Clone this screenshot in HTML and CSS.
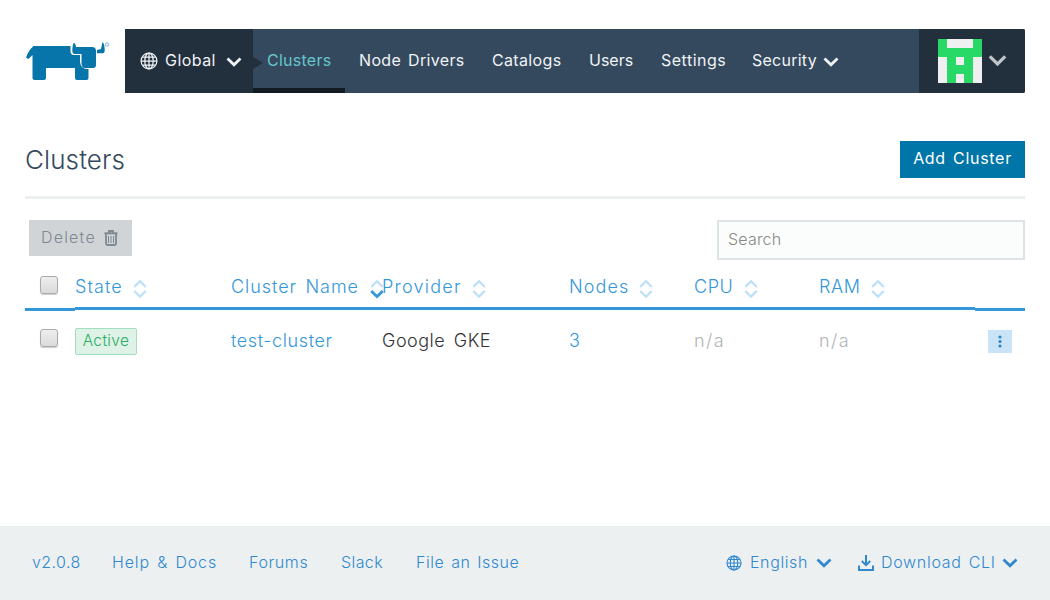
FILE: index.html
```html
<!DOCTYPE html>
<html lang="en">
<head>
<meta charset="utf-8">
<title>Clusters</title>
<link rel="stylesheet" href="styles.css">
</head>
<body>
<svg class="defs" width="0" height="0">
  <symbol id="chev" viewBox="0 0 16 10"><path d="M1.500 1.500l6.500 6.300L14.500 1.500" fill="none" stroke="currentColor" stroke-width="2.8"/></symbol>
  <symbol id="globe" viewBox="0 0 18 18"><g fill="none" stroke="currentColor" stroke-width="1.25"><circle cx="9" cy="9" r="7.9"/><ellipse cx="9" cy="9" rx="4.2" ry="7.9"/><path d="M9 1v16M1 9h16M2.500 5h13M2.500 13h13"/></g></symbol>
  <symbol id="sort" viewBox="0 0 14 20"><g fill="none" stroke="currentColor" stroke-width="2.4"><path d="M1.200 8L7 2.200 12.800 8"/><path d="M1.200 12L7 17.500 12.800 12"/></g></symbol>
</svg>
<header class="top">
  <svg class="logo" viewBox="0 0 100 64">
    <g fill="#0775aa">
      <path d="M8.500 17H45.500V23Q46 26 49 26H55V33Q56 40 62 40H63.500V49Q63.500 51 61.500 51H52Q50 51 50 49V39H21V49Q21 51 19 51H9.500Q7.500 51 7.500 49V26L3.500 30L1 28.500Q3 22 8.500 17Z"/>
      <path d="M49 13.500Q51 15 51 18H67Q71 18 71 22V36Q71 39 68 39H60Q56.500 39 56.500 34V25H50Q47.500 25 47.300 22Q47.300 16 49 13.500Z"/>
      <path d="M77.500 13Q79.800 15 79.700 22Q79.500 24.300 77.500 24.300H72V21L76 20Z"/>
    </g>
    <circle cx="82" cy="15.500" r="1.700" fill="none" stroke="#5ba3c7" stroke-width=".8"/>
  </svg>
  <nav class="bar">
    <a class="scope"><svg class="ico18"><use href="#globe"/></svg><span class="t-global">Global</span><svg class="chev"><use href="#chev"/></svg></a>
    <a class="item active">Clusters</a>
    <a class="item w-drivers">Node Drivers</a>
    <a class="item w-catalogs">Catalogs</a>
    <a class="item w-users">Users</a>
    <a class="item w-settings">Settings</a>
    <a class="item w-security"><span>Security</span><svg class="chev"><use href="#chev"/></svg></a>
    <a class="user">
      <svg class="avatar" viewBox="0 0 44 44" shape-rendering="crispEdges"><path fill="#f0f0f0" d="M0 0h44v44H0z"/><path fill="#28d968" d="M0 0h9v9h26V0h9v18h-9v26h-9v-9h-8v9H9V18H0zM18 18v8h8v-8z" fill-rule="evenodd"/></svg>
      <svg class="chev big"><use href="#chev"/></svg>
    </a>
  </nav>
</header>
<main>
  <section class="head"><h1>Clusters</h1><button class="add">Add Cluster</button></section>
  <section class="tools">
    <button class="delete"><span>Delete</span><svg viewBox="0 0 14 16"><path d="M.5 3.300h13" stroke="currentColor" stroke-width="2" fill="none"/><path d="M5 3V1h4v2M2 4v9.500q0 1.500 1.500 1.500h7q1.500 0 1.500-1.500V4" fill="none" stroke="currentColor" stroke-width="1.800"/><path d="M4.500 6v7M7 6v7M9.500 6v7" stroke="currentColor"/></svg></button>
    <input class="search" placeholder="Search">
  </section>
  <section class="table">
    <div class="row headrow">
      <div class="edge"><i class="check"></i></div>
      <div class="th t-state"><span>State</span><svg class="sort"><use href="#sort"/></svg></div>
      <div class="th t-name"><span>Cluster Name</span><svg class="sort" viewBox="0 0 14 20"><g fill="none" stroke="currentColor" stroke-width="2.4"><path d="M1.200 8L7 2.200 12.800 8"/><path stroke="#3497da" stroke-width="2.800" d="M1.200 12L7 17.500 12.800 12"/></g></svg></div>
      <div class="th t-provider"><span>Provider</span><svg class="sort"><use href="#sort"/></svg></div>
      <div class="th t-nodes"><span>Nodes</span><svg class="sort"><use href="#sort"/></svg></div>
      <div class="th t-cpu"><span>CPU</span><svg class="sort"><use href="#sort"/></svg></div>
      <div class="th t-ram"><span>RAM</span><svg class="sort"><use href="#sort"/></svg></div>
      <div class="edge"></div>
    </div>
    <div class="row body">
      <div class="cb"><i class="check"></i></div>
      <div><span class="badge">Active</span></div>
      <div class="cell link t-test">test-cluster</div>
      <div class="cell t-gke">Google GKE</div>
      <div class="cell link">3</div>
      <div class="cell na">n/a</div>
      <div class="cell na">n/a</div>
      <div class="act"><button class="more"><svg viewBox="0 0 4 13"><circle cx="2" cy="2" r="1.600"/><circle cx="2" cy="6.500" r="1.600"/><circle cx="2" cy="11" r="1.600"/></svg></button></div>
    </div>
  </section>
</main>
<footer>
  <a class="f-ver">v2.0.8</a><a class="f-help">Help &amp; Docs</a><a class="f-forums">Forums</a><a class="f-slack">Slack</a><a class="f-issue">File an Issue</a>
  <a class="f-lang"><svg class="ico16"><use href="#globe"/></svg><span>English</span><svg class="chev fc"><use href="#chev"/></svg></a>
  <a class="f-cli"><svg class="ico16" viewBox="0 0 16 16"><path d="M8 0v9M3.800 6L8 10.200 12.200 6M1 10.500V15h14v-4.500" fill="none" stroke="currentColor" stroke-width="2"/></svg><span>Download CLI</span><svg class="chev fc"><use href="#chev"/></svg></a>
</footer>
</body>
</html>
```
FILE: styles.css
```css
* { box-sizing: border-box; }
body { margin: 0; height: 600px; display: flex; flex-direction: column; background: #fff; font: 300 18px/24px Inter, Lato, sans-serif; letter-spacing: .4px; color: #333; overflow: hidden; }
button { border: 0; padding: 0; font: inherit; letter-spacing: inherit; }
svg { display: block; flex: none; }
.defs { position: absolute; }
.top { display: flex; height: 93px; padding: 29px 25px 0; }
.logo { width: 100px; height: 64px; }
.bar { flex: 1; display: flex; background: #34495e; color: #f0f3f5; font-size: 16px; font-weight: 400; letter-spacing: .25px; border-radius: 0 2px 2px 0; overflow: hidden; }
.bar a { display: flex; align-items: center; height: 64px; white-space: nowrap; }
.scope { position: relative; width: 128px; padding-left: 15px; background: #222f3d; }
.scope::after { content: ""; position: absolute; left: 128px; top: 28px; border: 6px solid transparent; border-left: 10px solid #222f3d; border-right: 0; z-index: 1; }
.ico18 { width: 18px; height: 18px; margin-top: -1px; }
.t-global { width: 61px; margin: -2px 0 0 7px; letter-spacing: .45px; }
.chev { width: 16px; height: 10px; margin-top: 2px; }
.bar .item { padding: 0 0 2px 14px; }
.bar .active { width: 92px; color: #65c6cb; box-shadow: inset 0 -5px #121a22; }
.w-drivers { width: 133px; letter-spacing: .35px; word-spacing: 2px; }
.w-catalogs { width: 97px; letter-spacing: .35px; }
.bar .w-users { width: 72px; letter-spacing: 0; }
.w-settings { width: 91px; letter-spacing: .5px; }
.w-security span { width: 71px; }
.w-security .chev { margin-top: 3px; }
.user { margin-left: auto; width: 106px; padding-left: 19px; background: #222f3d; }
.avatar { width: 44px; height: 44px; }
.big { width: 19px; height: 13px; margin: -1px 0 0 6px; color: #bdc3c7; }
main { flex: 1; padding: 0 25px; }
.head { display: flex; justify-content: space-between; height: 106px; padding-top: 48px; border-bottom: 3px solid #ecf0f1; }
h1 { margin: 3px 0 0; font-size: 26px; line-height: 32px; font-weight: 300; color: #34495e; letter-spacing: .1px; }
.add { width: 125px; height: 37px; padding-bottom: 3px; background: #0075a8; color: #fff; font-size: 16px; font-weight: 400; letter-spacing: .7px; word-spacing: 2px; }
.tools { display: flex; justify-content: space-between; padding: 21px 0 0 4px; height: 69px; }
.delete { display: flex; align-items: center; width: 103px; height: 36px; padding: 0 0 1px 12px; background: #d0d4d7; color: #7f8993; font-size: 16px; letter-spacing: 1.2px; }
.delete span { width: 63px; margin-top: -1px; text-align: left; }
.delete svg { width: 14px; height: 16px; }
.search { width: 308px; height: 40px; padding: 0 9px 2px; border: 2px solid #dce4e6; border-radius: 0; background: #fbfdfc; font: 300 16px Inter, sans-serif; letter-spacing: .2px; }
.search::placeholder { color: #888; }
.row { display: grid; grid-template-columns: 50px 156px 151px 187px 125px 125px 156px 50px; }
.th { display: flex; height: 42px; padding-top: 7px; border-bottom: 3px solid #3497da; color: #3497da; white-space: nowrap; }
.edge { height: 43px; border-bottom: 3px solid #3497da; padding: 8px 0 0 15px; }
.sort { width: 14px; height: 20px; margin: 4px 0 0; color: #bfe0f7; }
.th span { flex: none; }
.t-state span { width: 58px; letter-spacing: 1.1px; }
.t-name span { width: 139px; letter-spacing: .95px; word-spacing: 2.5px; }
.t-provider span { width: 90px; letter-spacing: 1.25px; }
.t-nodes span { width: 70px; letter-spacing: 1.1px; }
.t-cpu span { width: 50px; letter-spacing: .6px; }
.t-ram span { width: 52px; letter-spacing: .6px; }
.check { display: block; width: 18px; height: 18px; border: 1px solid #aaa; border-radius: 3px; background: linear-gradient(#eee, #dadada); box-shadow: 0 1px 1px #ccc; }
.body { padding-top: 17px; }
.cell { padding-top: 1px; }
.cb { padding: 1px 0 0 15px; }
.badge { display: block; width: 62px; height: 27px; border: 1px solid #a4dec0; border-radius: 2px; background: #def2e7; color: #27ae60; font-size: 15.5px; line-height: 24px; letter-spacing: .35px; text-align: center; }
.link { color: #3497da; }
.t-test { letter-spacing: .6px; }
.t-gke { word-spacing: 3px; letter-spacing: .5px; }
.na { color: #b0b4b7; letter-spacing: 1.4px; }
.more { display: flex; align-items: center; justify-content: center; width: 24px; height: 23px; margin: 2px 0 0 13px; padding-right: 1px; background: #cae3f6; }
.more svg { width: 4px; height: 13px; fill: #2f84ca; }
footer { display: flex; height: 74px; padding: 24px 0 0 32px; background: #ecf0f1; color: #3088cf; font-size: 16px; letter-spacing: .6px; word-spacing: 2px; white-space: nowrap; }
.f-ver { width: 80px; letter-spacing: .4px; }
.f-help { width: 137px; letter-spacing: .85px; }
.f-forums { width: 92px; }
.f-slack { width: 75px; letter-spacing: .4px; }
.f-issue { width: 310px; letter-spacing: .5px; }
.f-lang, .f-cli { display: flex; }
.f-lang { width: 132px; }
.f-lang span { width: 66px; }
.f-cli span { width: 121px; letter-spacing: .7px; }
.ico16 { width: 16px; height: 16px; margin: 5px 7px 0 0; }
.f-lang .ico16 { margin-right: 8px; }
.fc { margin: 8px 0 0; }
```
